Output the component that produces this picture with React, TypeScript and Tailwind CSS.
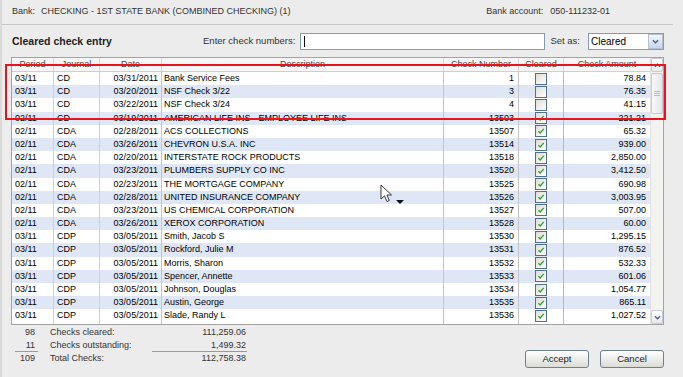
import React from 'react';

type Row = {
  period: string;
  journal: string;
  date: string;
  desc: string;
  num: string;
  cleared: boolean;
  amount: string;
};

const rows: Row[] = [
  { period: '03/11', journal: 'CD', date: '03/31/2011', desc: 'Bank Service Fees', num: '1', cleared: false, amount: '78.84' },
  { period: '03/11', journal: 'CD', date: '03/20/2011', desc: 'NSF Check 3/22', num: '3', cleared: false, amount: '76.35' },
  { period: '03/11', journal: 'CD', date: '03/22/2011', desc: 'NSF Check 3/24', num: '4', cleared: false, amount: '41.15' },
  { period: '02/11', journal: 'CD', date: '03/19/2011', desc: 'AMERICAN LIFE INS - EMPLOYEE LIFE INS', num: '13503', cleared: true, amount: '221.21' },
  { period: '02/11', journal: 'CDA', date: '02/28/2011', desc: 'ACS COLLECTIONS', num: '13507', cleared: true, amount: '65.32' },
  { period: '02/11', journal: 'CDA', date: '03/26/2011', desc: 'CHEVRON U.S.A. INC', num: '13514', cleared: true, amount: '939.00' },
  { period: '02/11', journal: 'CDA', date: '02/20/2011', desc: 'INTERSTATE ROCK PRODUCTS', num: '13518', cleared: true, amount: '2,850.00' },
  { period: '02/11', journal: 'CDA', date: '03/23/2011', desc: 'PLUMBERS SUPPLY CO INC', num: '13520', cleared: true, amount: '3,412.50' },
  { period: '02/11', journal: 'CDA', date: '02/23/2011', desc: 'THE MORTGAGE COMPANY', num: '13525', cleared: true, amount: '690.98' },
  { period: '02/11', journal: 'CDA', date: '02/28/2011', desc: 'UNITED INSURANCE COMPANY', num: '13526', cleared: true, amount: '3,003.95' },
  { period: '02/11', journal: 'CDA', date: '03/23/2011', desc: 'US CHEMICAL CORPORATION', num: '13527', cleared: true, amount: '507.00' },
  { period: '02/11', journal: 'CDA', date: '03/26/2011', desc: 'XEROX CORPORATION', num: '13528', cleared: true, amount: '60.00' },
  { period: '03/11', journal: 'CDP', date: '03/05/2011', desc: 'Smith, Jacob S', num: '13530', cleared: true, amount: '1,295.15' },
  { period: '03/11', journal: 'CDP', date: '03/05/2011', desc: 'Rockford, Julie M', num: '13531', cleared: true, amount: '876.52' },
  { period: '03/11', journal: 'CDP', date: '03/05/2011', desc: 'Morris, Sharon', num: '13532', cleared: true, amount: '532.33' },
  { period: '03/11', journal: 'CDP', date: '03/05/2011', desc: 'Spencer, Annette', num: '13533', cleared: true, amount: '601.06' },
  { period: '03/11', journal: 'CDP', date: '03/05/2011', desc: 'Johnson, Douglas', num: '13534', cleared: true, amount: '1,054.77' },
  { period: '03/11', journal: 'CDP', date: '03/05/2011', desc: 'Austin, George', num: '13535', cleared: true, amount: '865.11' },
  { period: '03/11', journal: 'CDP', date: '03/05/2011', desc: 'Slade, Randy L', num: '13536', cleared: true, amount: '1,027.52' },
];

const CheckBox: React.FC<{ checked: boolean }> = ({ checked }) => (
  <span className="flex h-[12px] w-[12px] items-center justify-center border border-[#4f6f8f] bg-gradient-to-br from-[#dedcd4] to-white">
    {checked && (
      <svg viewBox="0 0 10 10" className="h-[8px] w-[8px]">
        <path d="M1.8 5.2 L4 7.4 L8.4 2.4" stroke="#2ea22e" strokeWidth="1.7" fill="none" />
      </svg>
    )}
  </span>
);

const Arrow: React.FC<{ up?: boolean }> = ({ up }) => (
  <svg viewBox="0 0 8 8" className="h-[7px] w-[7px]">
    <path d={up ? 'M1 5.5 L4 2.5 L7 5.5' : 'M1 2.5 L4 5.5 L7 2.5'} stroke="#4d6185" strokeWidth="1.6" fill="none" />
  </svg>
);

const headCell = 'flex h-full items-center justify-center border-r border-[#d5d5d5]';

const GridRow: React.FC<{ row: Row; shaded: boolean }> = ({ row, shaded }) => (
  <div className={`flex h-[13.2px] items-center text-black ${shaded ? 'bg-[#dfe7f6]' : 'bg-white'}`}>
    <div className="h-full w-[42px] border-r border-[#d0d0d0] pl-[3px] leading-[13.2px]">{row.period}</div>
    <div className="h-full w-[46px] border-r border-[#d0d0d0] pl-[3px] leading-[13.2px]">{row.journal}</div>
    <div className="h-full w-[62px] border-r border-[#c4c4c4] pr-[3px] text-right leading-[13.2px]">{row.date}</div>
    <div className="h-full w-[282px] overflow-hidden whitespace-nowrap border-r border-[#c4c4c4] pl-[2px] leading-[13.2px]">{row.desc}</div>
    <div className="h-full w-[75px] border-r border-[#c4c4c4] pr-[4px] text-right leading-[13.2px]">{row.num}</div>
    <div className="flex h-full w-[45px] items-center justify-center border-r border-[#b8b8b8]">
      <CheckBox checked={row.cleared} />
    </div>
    <div className="h-full w-[86px] pr-[4px] text-right leading-[13.2px]">{row.amount}</div>
  </div>
);

export default function App() {
  return (
    <div className="relative h-[377px] w-[683px] overflow-hidden border-l-2 border-[#dadada] bg-[#ececec] font-['Liberation_Sans',Arial,sans-serif] text-[9px] text-[#333]">
      {/* bank line */}
      <div className="mr-[10px] flex h-[25px] items-center justify-between border-b border-[#c8c8c8] pl-[10px] pr-[63px]">
        <div>
          <span>Bank:</span>
          <span className="ml-[6px]">CHECKING - 1ST STATE BANK (COMBINED CHECKING) (1)</span>
        </div>
        <div>
          <span>Bank account:</span>
          <span className="ml-[7px]">050-111232-01</span>
        </div>
      </div>

      {/* entry line */}
      <div className="mt-[8px] flex h-[17px] items-center pl-[10px] pr-[19px] text-[9.5px]">
        <div className="flex-1 text-[10.5px] font-bold text-[#222]">Cleared check entry</div>
        <div className="mr-[5px]">Enter check numbers:</div>
        <div className="flex h-full w-[245px] items-center border border-[#7f9db9] bg-white pl-[3px]">
          <span className="h-[11px] w-px bg-black" />
        </div>
        <div className="ml-[5px] mr-[8px]">Set as:</div>
        <div className="flex h-full w-[76px] items-center justify-between border border-[#7f9db9] bg-white pl-[2px] text-[10px] text-black">
          <span>Cleared</span>
          <span className="flex h-[15px] w-[15px] items-center justify-center border border-[#b2c1d6] bg-gradient-to-b from-[#f4f6fb] to-[#c9d5ea]">
            <Arrow />
          </span>
        </div>
      </div>

      {/* grid */}
      <div className="ml-[9px] mr-[19px] mt-[7px] flex h-[268px] border border-[#a3a3a3] bg-white">
        <div className="flex flex-1 flex-col">
          <div className="flex h-[14px] items-center border-b border-[#cfcfcf] bg-[#f6f6f6] text-[#444]">
            <div className={`${headCell} w-[42px]`}>Period</div>
            <div className={`${headCell} w-[46px]`}>Journal</div>
            <div className={`${headCell} w-[62px]`}>Date</div>
            <div className={`${headCell} w-[282px]`}>Description</div>
            <div className={`${headCell} w-[75px]`}>Check Number</div>
            <div className={`${headCell} w-[45px]`}>Cleared</div>
            <div className="flex h-full w-[86px] items-center justify-center">Check Amount</div>
          </div>
          <div className="flex-1 overflow-hidden">
            {rows.map((r, i) => (
              <GridRow key={i} row={r} shaded={i % 2 === 1} />
            ))}
            <div className="flex h-[13px]">
              <div className="w-[42px] border-r border-[#d0d0d0]" />
              <div className="w-[46px] border-r border-[#d0d0d0]" />
              <div className="w-[62px] border-r border-[#c4c4c4]" />
              <div className="w-[282px] border-r border-[#c4c4c4]" />
              <div className="w-[75px] border-r border-[#c4c4c4]" />
              <div className="w-[45px] border-r border-[#b8b8b8]" />
            </div>
          </div>
        </div>

        {/* scrollbar */}
        <div className="flex w-[15px] flex-col border-l border-[#e2e2e2] bg-[#f2f2ef]">
          <div className="flex h-[14px] items-center justify-center rounded-[2px] border border-[#c3cbd6] bg-gradient-to-b from-white to-[#e6e9ee]">
            <Arrow up />
          </div>
          <div className="mt-[1px] flex h-[41px] flex-col items-center justify-center gap-[1px] rounded-[2px] border border-[#c3cbd6] bg-gradient-to-r from-[#f8f8f8] to-[#e4e6ea]">
            <span className="h-px w-[6px] bg-[#b4bcc8]" />
            <span className="h-px w-[6px] bg-[#b4bcc8]" />
            <span className="h-px w-[6px] bg-[#b4bcc8]" />
          </div>
          <div className="flex-1" />
          <div className="flex h-[14px] items-center justify-center rounded-[2px] border border-[#c3cbd6] bg-gradient-to-b from-white to-[#e6e9ee]">
            <Arrow />
          </div>
        </div>
      </div>

      {/* totals and buttons */}
      <div className="flex pr-[19px] pt-[1px]">
        <div className="flex flex-col pl-[13px]">
          <div className="flex h-[13px] items-center">
            <div className="w-[23px] pr-[3px] text-right">98</div>
            <div className="ml-[12px] w-[102px]">Checks cleared:</div>
            <div className="w-[95px] pr-[1px] text-right">111,259.06</div>
          </div>
          <div className="flex h-[13px] items-center">
            <div className="h-full w-[23px] border-b border-[#9a9a9a] pr-[3px] text-right leading-[13px]">11</div>
            <div className="ml-[12px] w-[102px]">Checks outstanding:</div>
            <div className="h-full w-[95px] border-b border-[#9a9a9a] pr-[1px] text-right leading-[13px]">1,499.32</div>
          </div>
          <div className="flex h-[13px] items-center">
            <div className="w-[23px] pr-[3px] text-right">109</div>
            <div className="ml-[12px] w-[102px]">Total Checks:</div>
            <div className="w-[95px] pr-[1px] text-right">112,758.38</div>
          </div>
        </div>
        <div className="ml-auto mt-[24px] flex gap-[11px]">
          <button className="h-[18px] w-[64px] rounded-[3px] border border-[#6f7f95] bg-gradient-to-b from-white to-[#dcdcd6] text-[9.5px] text-[#222]">
            Accept
          </button>
          <button className="h-[18px] w-[64px] rounded-[3px] border border-[#6f7f95] bg-gradient-to-b from-white to-[#dcdcd6] text-[9.5px] text-[#222]">
            Cancel
          </button>
        </div>
      </div>

      {/* red highlight drawn over the first rows */}
      <div className="pointer-events-none absolute left-[3px] top-[64px] h-[56px] w-[661px] border-2 border-[#e8141c]" />

      {/* mouse pointer */}
      <svg className="pointer-events-none absolute left-[378px] top-[184px]" width="26" height="22" viewBox="0 0 26 22">
        <path d="M1 1 L1 15 L4.5 11.8 L7 17.5 L9.3 16.5 L6.9 11 L11.5 11 Z" fill="white" stroke="#222" strokeWidth="0.9" strokeLinejoin="round" />
        <path d="M16 16 L24 16 L20 20 Z" fill="#111" />
      </svg>
    </div>
  );
}
